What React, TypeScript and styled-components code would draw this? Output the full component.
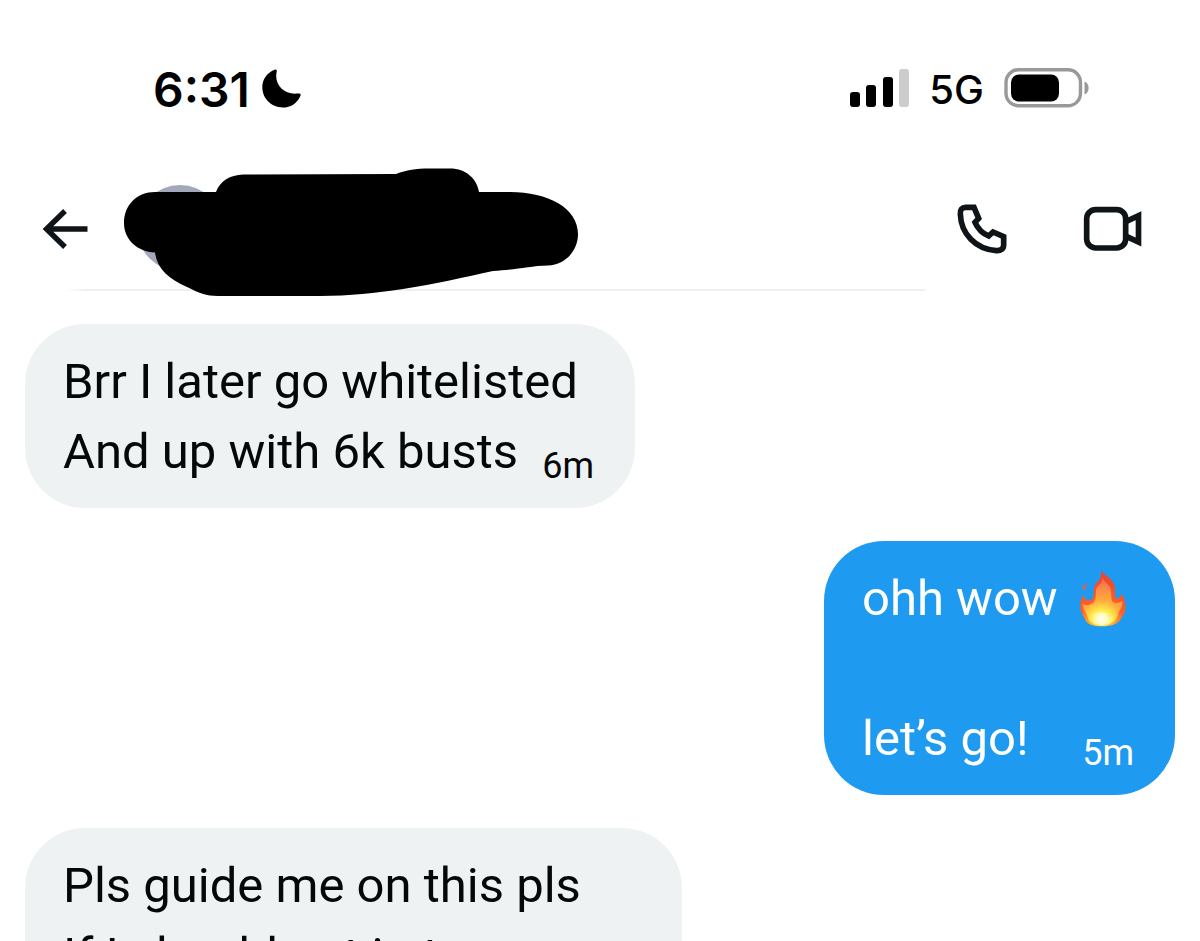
import React from 'react';
import styled, { createGlobalStyle } from 'styled-components';

const GlobalStyle = createGlobalStyle`
  * { box-sizing: border-box; }
  body { margin: 0; background: #fff; }
`;

const Screen = styled.main`
  display: flex;
  flex-direction: column;
  height: 100vh;
  overflow: hidden;
  background: #fff;
  color: #050708;
  font-family: Roboto, 'Open Sans', sans-serif;
`;

const StatusBar = styled.div`
  display: flex;
  flex: none;
  align-items: center;
  justify-content: space-between;
  height: 128px;
  padding: 48px 111px 0 153px;
  color: #000;
  font-family: Inter, sans-serif;
`;

const StatusGroup = styled.div`
  display: flex;
  align-items: center;
  gap: 12px;
`;

const StatusIcons = styled(StatusGroup)`
  gap: 20px;
`;

const Clock = styled.time`
  padding-top: 4px;
  font-size: 48px;
  font-weight: 600;
  line-height: 56px;
`;

const Network = styled.span`
  padding-top: 4px;
  font-size: 40px;
  font-weight: 500;
  line-height: 48px;
`;

const Header = styled.header`
  position: relative;
  display: flex;
  flex: none;
  align-items: center;
  gap: 36px;
  height: 172px;
  padding: 30px 57px 0 42px;

  &::before {
    content: '';
    position: absolute;
    left: 66px;
    right: 275px;
    bottom: 9px;
    height: 2px;
    background: linear-gradient(90deg, #fff, #efeff1 20px, #efeff1);
  }
`;

const IconButton = styled.button`
  display: flex;
  padding: 0;
  border: 0;
  background: none;
  color: #0f1419;
  cursor: pointer;
`;

const Contact = styled.div`
  position: relative;
  display: flex;
  flex: 1;
`;

const Actions = styled.div`
  display: flex;
  align-items: center;
  gap: 76px;
`;

const Thread = styled.section`
  display: flex;
  flex: none;
  flex-direction: column;
  align-items: flex-start;
  gap: 33px;
  padding: 24px 25px;
`;

const Bubble = styled.article<{ $mine?: boolean; $min: number }>`
  align-self: ${(p) => (p.$mine ? 'flex-end' : 'flex-start')};
  min-width: ${(p) => p.$min}px;
  padding: 23px 41px 21px 38px;
  border-radius: 60px;
  background: ${(p) => (p.$mine ? '#1e9bf0' : '#eef2f3')};
  color: ${(p) => (p.$mine ? '#fff' : 'inherit')};
`;

const Message = styled.p`
  min-height: 70px;
  margin: 0;
  font-size: 49px;
  line-height: 70px;
  white-space: pre;
`;

const LastLine = styled.div`
  display: flex;
  align-items: flex-end;
  justify-content: space-between;
  gap: 20px;
`;

const Sent = styled.time`
  font-size: 36px;
  line-height: 42px;
`;

const FlameSvg = styled.svg`
  margin-left: 10px;
  vertical-align: -12px;
`;

const Moon = () => (
  <svg width="39" height="39" viewBox="367 58 118 117" aria-hidden="true">
    <path d="M405 60C411 57 413 62 411 68C404 104 432 136 474 132C482 130 486 133 483 139C473 162 453 174 430 174C395 174 368 147 368 113C368 89 382 69 405 60Z" />
  </svg>
);

const Signal = () => (
  <svg width="60" height="38" viewBox="0 0 60 38" role="img" aria-label="Signal">
    <rect x="1" y="23" width="10" height="15" rx="3" />
    <rect x="17" y="16" width="10" height="22" rx="3" />
    <rect x="34" y="8" width="10" height="30" rx="3" />
    <rect x="50" y="0" width="10" height="38" rx="3" fill="#ccc" />
  </svg>
);

const Battery = () => (
  <svg width="85" height="40" viewBox="0 0 85 40" role="img" aria-label="Battery">
    <rect x="2" y="1.8" width="74.5" height="36" rx="12.5" fill="#fff" stroke="#999" strokeWidth="3.4" />
    <rect x="7" y="6.5" width="48" height="27" rx="8" />
    <path d="M80.5 13.5C86 15.5 86 24.5 80.5 26.5Z" fill="#999" />
  </svg>
);

const BackIcon = () => (
  <svg width="46" height="42" viewBox="42 208 46 42" fill="none" stroke="currentColor" strokeWidth="5.4" aria-hidden="true">
    <path d="M65 211L46.5 229L65 247M46.5 229H87.5" />
  </svg>
);

const Redaction = () => (
  <svg width="456" height="138" viewBox="124 160 456 138" role="img" aria-label="Contact">
    <circle cx="180" cy="228" r="43" fill="#a3a9ba" />
    <path d="M124 223C124 205 137 192 155 192H216C220 181 230 175 243 174.5L396 174C407 170 415 168.5 430 168.5H450C466 168.5 477 179 479 192H510C548 192 578 208 578 234C578 251 565 265 548 265.5C528 266 516 270 493 271C465 277 435 284 403 289C375 293 350 296 320 296H218C206 296 199 293 187 287C169 279 157 269 155 252.5C138 252 124 240 124 223Z" />
  </svg>
);

const PhoneIcon = () => (
  <svg width="50" height="50" viewBox="50 42 150 150" fill="none" stroke="currentColor" strokeWidth="17" aria-hidden="true">
    <path d="M76 52H101L115 85L104 97C112 115 126 130 145 138L158 126L190 140V164C190 176 182 183 168 182C106 178 62 132 60 72C59 59 65 52 76 52Z" />
  </svg>
);

const VideoIcon = () => (
  <svg width="60" height="46" viewBox="430 48 180 138" fill="none" stroke="currentColor" strokeWidth="17" aria-hidden="true">
    <rect x="441" y="59" width="117" height="115" rx="27" />
    <path d="M560 94L596.5 77V156L560 139" />
  </svg>
);

const Flame = () => (
  <FlameSvg width="46" height="58" viewBox="61 29 138 172" role="img" aria-label="fire">
    <defs>
      <radialGradient id="outer" gradientUnits="userSpaceOnUse" cx="126" cy="188" r="150">
        <stop offset="0" stopColor="#ffe23c" />
        <stop offset="0.25" stopColor="#ffa62e" />
        <stop offset="0.45" stopColor="#f9602e" />
        <stop offset="1" stopColor="#ea432d" />
      </radialGradient>
      <radialGradient id="middle" gradientUnits="userSpaceOnUse" cx="126" cy="184" r="125">
        <stop offset="0" stopColor="#fffbe0" />
        <stop offset="0.24" stopColor="#fff04d" />
        <stop offset="0.5" stopColor="#ffab3b" />
        <stop offset="1" stopColor="#fb7050" />
      </radialGradient>
      <radialGradient id="core" gradientUnits="userSpaceOnUse" cx="126" cy="178" r="40">
        <stop offset="0" stopColor="#fffff4" />
        <stop offset="0.4" stopColor="#fffbc0" />
        <stop offset="1" stopColor="#ffee50" stopOpacity="0" />
      </radialGradient>
    </defs>
    <path d="M126 30C129 46 151 50 161 69C169 86 165 104 169 117C178 117 184 110 185 101C194 115 199 132 197 150C195 164 188 169 184 177C178 190 158 200 127 200C99 200 82 193 77 181C72 169 63 160 62 143C61 127 65 115 71 105C73 116 80 124 93 121C106 117 99 97 104 81C109 68 120 64 124 50Z" fill="url(#outer)" />
    <path d="M83 70C82 79 75 80 77 92C69 91 66 82 72 77C76 74 80 75 83 70Z" fill="#e2604a" />
    <path d="M129 55C134 69 152 76 154 94C156 110 153 121 161 128C172 132 182 128 188 124C190 147 176 150 174 168C167 188 149 195 126 195C103 195 86 187 83 170C81 158 69 151 69 133C79 140 98 136 105 123C112 108 106 94 112 83C118 75 129 71 129 55Z" fill="url(#middle)" />
    <ellipse cx="126" cy="178" rx="40" ry="20" fill="url(#core)" />
  </FlameSvg>
);

export default function App() {
  return (
    <>
      <GlobalStyle />
      <Screen>
        <StatusBar>
          <StatusGroup>
            <Clock>6:31</Clock>
            <Moon />
          </StatusGroup>
          <StatusIcons>
            <Signal />
            <Network>5G</Network>
            <Battery />
          </StatusIcons>
        </StatusBar>
        <Header>
          <IconButton type="button" aria-label="Back">
            <BackIcon />
          </IconButton>
          <Contact>
            <Redaction />
          </Contact>
          <Actions>
            <IconButton type="button" aria-label="Call">
              <PhoneIcon />
            </IconButton>
            <IconButton type="button" aria-label="Video call">
              <VideoIcon />
            </IconButton>
          </Actions>
        </Header>
        <Thread>
          <Bubble $min={610}>
            <Message>Brr I later go whitelisted</Message>
            <LastLine>
              <Message>And up with 6k busts</Message>
              <Sent>6m</Sent>
            </LastLine>
          </Bubble>
          <Bubble $mine $min={351}>
            <Message>
              {'ohh wow '}
              <Flame />
            </Message>
            <Message />
            <LastLine>
              <Message>let’s go!</Message>
              <Sent>5m</Sent>
            </LastLine>
          </Bubble>
          <Bubble $min={657}>
            <Message>Pls guide me on this pls</Message>
            <Message>If I should get in to</Message>
          </Bubble>
        </Thread>
      </Screen>
    </>
  );
}
